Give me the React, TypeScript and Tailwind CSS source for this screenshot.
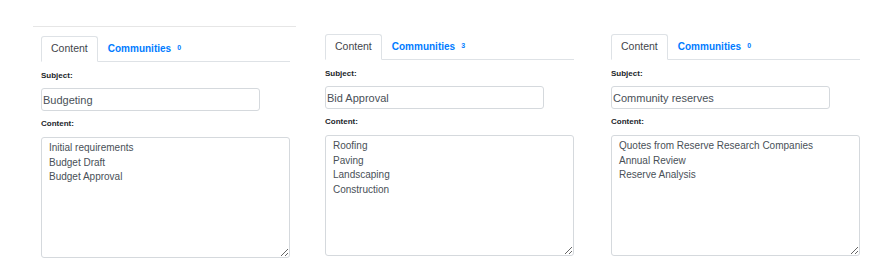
const panels = [
  { subject: 'Budgeting', content: 'Initial requirements\nBudget Draft\nBudget Approval', count: 0 },
  { subject: 'Bid Approval', content: 'Roofing\nPaving\nLandscaping\nConstruction', count: 3 },
  { subject: 'Community reserves', content: 'Quotes from Reserve Research Companies\nAnnual Review\nReserve Analysis', count: 0 },
];

function Panel({ subject, content, count }: { subject: string; content: string; count: number }) {
  return (
    <div className="w-[249px]">
      {/* Tabs */}
      <div className="flex h-[26px] border-b border-[#dee2e6]">
        <div className="-mb-px flex items-center rounded-t-[3px] border border-[#dee2e6] border-b-white bg-white px-[9px] text-[10.5px] text-[#3f454b]">
          Content
        </div>
        <div className="flex items-center px-[10px] text-[10px] font-bold text-[#007bff]">
          Communities
          <span className="ml-[6px] text-[7px] font-bold">{count}</span>
        </div>
      </div>

      <div className="mt-[8px] text-[8px] font-bold leading-[12px] text-[#212529]">Subject:</div>
      <input
        readOnly
        value={subject}
        className="mt-[6px] block h-[23px] w-[219px] rounded-[3px] border border-[#d5d9dd] px-[1px] text-[11px] text-[#495057] outline-none"
      />

      <div className="mt-[7px] text-[8px] font-bold leading-[12px] text-[#212529]">Content:</div>
      <textarea
        readOnly
        defaultValue={content}
        className="mt-[7px] block h-[121px] w-[249px] rounded-[3px] border border-[#d5d9dd] px-[7px] pt-[3px] text-[10px] leading-[14.5px] text-[#495057] outline-none"
      />
    </div>
  );
}

export default function App() {
  return (
    <div className="flex h-[274px] w-[886px] bg-white pl-[41px]" style={{ fontFamily: '"Liberation Sans", Arial, sans-serif' }}>
      <div className="flex flex-col">
        <div className="-mx-[8px] mt-[26px] mb-[9px] h-px w-[263px] bg-[#e6e6e6]" />
        <Panel {...panels[0]} />
      </div>
      <div className="ml-[35px] pt-[34px]">
        <Panel {...panels[1]} />
      </div>
      <div className="ml-[37px] pt-[34px]">
        <Panel {...panels[2]} />
      </div>
    </div>
  );
}
